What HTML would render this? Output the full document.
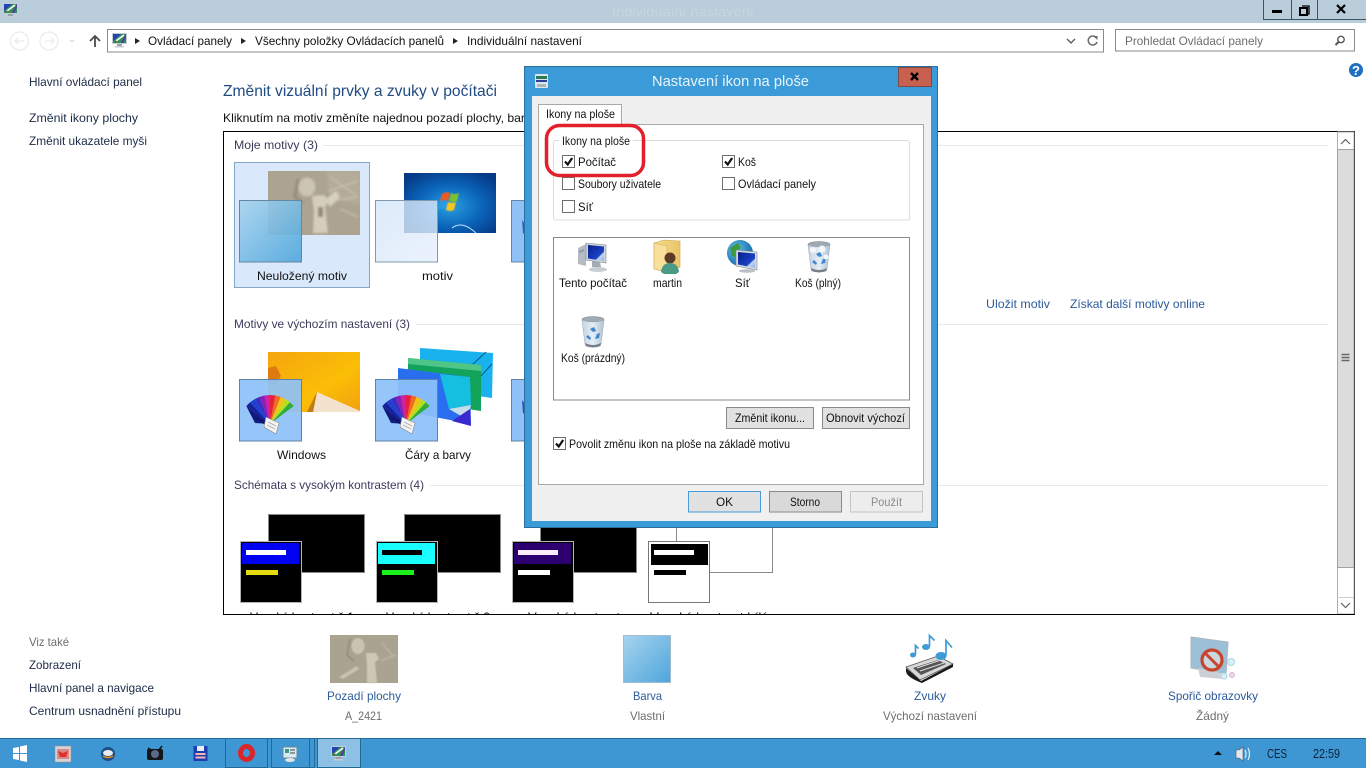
<!DOCTYPE html>
<html lang="cs"><head><meta charset="utf-8"><title>Individuální nastavení</title>
<style>
html,body{margin:0;padding:0;width:1366px;height:768px;overflow:hidden;background:#fff}
svg{display:block}
text{font-family:"Liberation Sans",sans-serif;font-size:12px;fill:#1c2b46}
.b{fill:#000}.d{fill:#111}.l{fill:#2b5a9b}.g{fill:#6d6d6d}.h{fill:#3b3b5c}
</style></head><body>
<svg xmlns="http://www.w3.org/2000/svg" width="1366" height="768" viewBox="0 0 1366 768">
<defs>
<linearGradient id="gs" x1="0" y1="0" x2="1" y2="1"><stop offset="0" stop-color="#a8d3ee"/><stop offset="1" stop-color="#4da6dc"/></linearGradient>
<linearGradient id="gl" x1="0" y1="0" x2="1" y2="1"><stop offset="0" stop-color="#d4e5f8"/><stop offset="1" stop-color="#e6f0fc"/></linearGradient>
<radialGradient id="w7" cx=".5" cy=".55" r=".65"><stop offset="0" stop-color="#2a9fe0"/><stop offset=".55" stop-color="#0a63b8"/><stop offset="1" stop-color="#063a86"/></radialGradient>
<linearGradient id="org" x1="0" y1="0" x2="1" y2="1"><stop offset="0" stop-color="#f5a50f"/><stop offset=".6" stop-color="#fbbe06"/><stop offset="1" stop-color="#f2a010"/></linearGradient>
<linearGradient id="scr" x1="0" y1="0" x2="1" y2="1"><stop offset="0" stop-color="#0a1f8a"/><stop offset=".68" stop-color="#1a43c8"/><stop offset=".74" stop-color="#c5d6f4"/><stop offset="1" stop-color="#8fade4"/></linearGradient>
<linearGradient id="fold" x1="0" y1="0" x2="1" y2="0"><stop offset="0" stop-color="#f6dc8c"/><stop offset="1" stop-color="#e9c46a"/></linearGradient>
<linearGradient id="bin" x1="0" y1="0" x2="1" y2="0"><stop offset="0" stop-color="#c3d3e2"/><stop offset=".5" stop-color="#e4eef6"/><stop offset="1" stop-color="#aec1d2"/></linearGradient>
<radialGradient id="globe" cx=".35" cy=".35" r=".75"><stop offset="0" stop-color="#5cc0ea"/><stop offset="1" stop-color="#135f9c"/></radialGradient>
<filter id="bl" x="-10%" y="-10%" width="120%" height="120%"><feGaussianBlur stdDeviation="1"/></filter>
<filter id="bs"><feGaussianBlur stdDeviation=".5"/></filter>
<clipPath id="panel"><rect x="224" y="132" width="1113" height="482"/></clipPath>
<clipPath id="cb"><rect width="92" height="64"/></clipPath>
<clipPath id="cb2"><rect width="68" height="48"/></clipPath>

<g id="mon15">
<rect x="0" y="0" width="15" height="11" fill="#c5ccd4"/>
<rect x="1" y="1" width="13" height="9" fill="#2f8f5a"/>
<path d="M1 1h8L1 8z" fill="#2541b8"/>
<path d="M14 1v3l-3 6H9z" fill="#5b2ea5"/>
<path d="M4 8L12 2" stroke="#fff" stroke-width="1.6"/>
<path d="M3 9l2-.6-1.200-1z" fill="#d22"/>
<rect x="5" y="11" width="5" height="2" fill="#9aa3ad"/>
<rect x="3" y="13" width="9" height="1.500" fill="#c9ced4"/>
</g>

<g id="baby">
<rect width="92" height="64" fill="#aca490"/>
<g filter="url(#bl)" clip-path="url(#cb)">
<path d="M58 0h34v34l-30-8z" fill="#b4ac99"/>
<path d="M62 6l26 18M60 20l30-10M64 30l26-4M72 38l18 8" stroke="#c6bfad" stroke-width="1.500" fill="none"/>
<ellipse cx="39" cy="16" rx="8.500" ry="9.500" fill="#cbc5b2"/>
<path d="M44 25l12-1 5 6-4 6 3 26-15 0 1-22z" fill="#d4cebb"/>
<path d="M58 28l10-8 4 6-10 10z" fill="#d6d0bd"/>
<path d="M30 8l-3 18 8 6" stroke="#948d7a" stroke-width="3" fill="none"/>
<rect x="50" y="36" width="5" height="10" fill="#928b78"/>
</g>
</g>

<g id="baby2">
<rect width="68" height="48" fill="#aaa390"/>
<g filter="url(#bs)">
<ellipse cx="28" cy="11" rx="6.500" ry="8" fill="#c9c3b0"/>
<path d="M36 18l10 0 3 6-4 3 2 21-10 0 0-18z" fill="#cdc7b4"/>
<path d="M9 42l18-11 2 3-16 10z" fill="#c9c3b0"/>
<path d="M52 8l12 14M50 26l16-6" stroke="#b9b29f" stroke-width="1.500"/>
<path d="M20 4l-3 16 7 6" stroke="#95907d" stroke-width="2" fill="none"/>
</g>
</g>

<g id="pal">
<g transform="translate(31,47)">
<path d="M0-2L-23.700-19.900-19.900-23.700z" fill="#16209a"/>
<path d="M0-2L-23.700-19.900-15-3z" fill="#101a80"/>
<path d="M0-2L-19.900-23.700-15.500-26.800z" fill="#1f3fd0"/>
<path d="M0-2L-15.500-26.800-10.600-29.100z" fill="#3a2fc0"/>
<path d="M0-2L-10.600-29.100-5.400-30.500z" fill="#8a1fb8"/>
<path d="M0-2L-5.400-30.500 0-31z" fill="#d41fa0"/>
<path d="M0-2L0-31 5.400-30.500z" fill="#e81f3a"/>
<path d="M0-2L5.400-30.500 10.600-29.100z" fill="#ef6a1a"/>
<path d="M0-2L10.600-29.100 15.500-26.800z" fill="#f4c01a"/>
<path d="M0-2L15.500-26.800 19.900-23.700z" fill="#b8e01a"/>
<path d="M0-2L19.900-23.700 23.700-19.900z" fill="#2faf3a"/>
<path d="M-16-9L-1-3 3 3-8-3z" fill="#0d1565"/>
<path d="M-4-9L9-3 6 8-6 1z" fill="#f3f3f3" stroke="#888" stroke-width=".6"/>
<path d="M-2-4l8 4M-3-1l8 4" stroke="#aaa" stroke-width=".8"/>
</g>
</g>

<g id="contrast">
<rect x="0.500" y="0.500" width="61" height="61" fill="#000" stroke="#b5b5b5"/>
</g>

<g id="pc">
<path d="M1 7l8-4v22l-8-2z" fill="#b4bbc2"/>
<path d="M2 10l5-2v2l-5 2z" fill="#8f98a2"/>
<path d="M9 2l20 2v18L9 19z" fill="#cfd4da" stroke="#7f8791" stroke-width=".6"/>
<path d="M11 4l16 1.500v14.500L11 17.500z" fill="url(#scr)"/>
<path d="M15 20l8 1 1 5h-9z" fill="#a5acb4"/>
<ellipse cx="21" cy="28.500" rx="9" ry="2.500" fill="#c9ced4"/>
</g>

<g id="binI">
<ellipse cx="13" cy="3.500" rx="11" ry="3" fill="#9fa9b1" stroke="#7f8890" stroke-width=".6"/>
<path d="M2 4l3 24q8 4 16 0l3-24q-11 4-22 0z" fill="url(#bin)" stroke="#9aa6b0" stroke-width=".5"/>
<path d="M10 13l4-2 2 4-3 1zM8 19l3 3-1 2-4-3zM17 18l3-1-1 5-4 1z" fill="#3f86cf"/>
<path d="M5 27q8 4 16 0l-.5 3q-7.500 3-15 0z" fill="#777e85"/>
</g>
</defs>

<!-- title bar -->
<rect width="1366" height="23" fill="#b9cdda"/>
<use href="#mon15" transform="translate(3,3)"/>
<text x="612" y="16" textLength="142" lengthAdjust="spacingAndGlyphs" style="font-size:13px;fill:#c6d6df">Individuální nastavení</text>
<path d="M1263.500 0v19.500h103M1291.500 0v19.500M1317.500 0v19.500" fill="none" stroke="#3f5463"/>
<rect x="1272" y="10" width="10" height="3" fill="#000"/>
<path d="M1302 6h7v8h-2" fill="none" stroke="#000" stroke-width="1.300"/>
<rect x="1300" y="8" width="7" height="7" fill="none" stroke="#000" stroke-width="2"/>
<path d="M1337 5l8 8M1345 5l-8 8" stroke="#000" stroke-width="2.200"/>

<!-- nav row -->
<g fill="none" stroke="#ececec" stroke-width="1.300">
<circle cx="19.500" cy="41" r="9"/><circle cx="49" cy="41" r="9"/>
<path d="M24 41h-9m3-3l-3 3 3 3M45 41h9m-3-3l3 3-3 3"/>
</g>
<path d="M69 40h6l-3 3z" fill="#e6e6e6"/>
<path d="M95 47v-11m-5 5l5-5 5 5" fill="none" stroke="#4b4b4b" stroke-width="1.800"/>
<rect x="107.500" y="29.500" width="996" height="22.500" fill="#fff" stroke="#8a8a8a"/>
<use href="#mon15" transform="translate(112,33)"/>
<path d="M135 38l5 3-5 3z" fill="#222"/>
<path d="M241 38l5 3-5 3zM453 38l5 3-5 3z" fill="#222"/>
<text x="148" y="45" textLength="84" lengthAdjust="spacingAndGlyphs" class="d">Ovládací panely</text>
<text x="255" y="45" textLength="189" lengthAdjust="spacingAndGlyphs" class="d">Všechny položky Ovládacích panelů</text>
<text x="467" y="45" textLength="115" lengthAdjust="spacingAndGlyphs" class="d">Individuální nastavení</text>
<path d="M1067 39l4 4 4-4" fill="none" stroke="#555" stroke-width="1.300"/>
<path d="M1096.500 38a4.500 4.500 0 1 0 .5 4" fill="none" stroke="#6b6b6b" stroke-width="1.500"/>
<path d="M1093 36h4.500v4z" fill="#6b6b6b"/>
<rect x="1115.500" y="29.500" width="239" height="21.500" fill="#fff" stroke="#8a8a8a"/>
<text x="1125" y="45" textLength="138" lengthAdjust="spacingAndGlyphs" class="g">Prohledat Ovládací panely</text>
<circle cx="1341" cy="39.500" r="3.200" fill="none" stroke="#555" stroke-width="1.400"/>
<path d="M1338.500 42l-3 3" stroke="#555" stroke-width="2"/>

<circle cx="1356" cy="70" r="7" fill="#1f70c1"/>
<text x="1352" y="75" style="font-size:13px;font-weight:bold;fill:#fff">?</text>

<!-- left nav -->
<text x="29" y="86" textLength="113" lengthAdjust="spacingAndGlyphs">Hlavní ovládací panel</text>
<text x="29" y="122" textLength="109" lengthAdjust="spacingAndGlyphs">Změnit ikony plochy</text>
<text x="29" y="145" textLength="118" lengthAdjust="spacingAndGlyphs">Změnit ukazatele myši</text>

<!-- header -->
<text x="223" y="96" textLength="274" lengthAdjust="spacingAndGlyphs" style="font-size:16px;fill:#1f4a82">Změnit vizuální prvky a zvuky v počítači</text>
<text x="223" y="122" textLength="302" lengthAdjust="spacingAndGlyphs" class="d">Kliknutím na motiv změníte najednou pozadí plochy, bar</text>

<!-- panel -->
<rect x="223.500" y="131.500" width="1131" height="483" fill="#fff" stroke="#000"/>
<g clip-path="url(#panel)">
<text x="234" y="149" textLength="84" lengthAdjust="spacingAndGlyphs" class="h">Moje motivy (3)</text>
<rect x="323" y="145" width="1005" height="1" fill="#e8e8e8"/>
<text x="234" y="328" textLength="176" lengthAdjust="spacingAndGlyphs" class="h">Motivy ve výchozím nastavení (3)</text>
<rect x="416" y="324" width="912" height="1" fill="#e8e8e8"/>
<text x="234" y="489" textLength="190" lengthAdjust="spacingAndGlyphs" class="h">Schémata s vysokým kontrastem (4)</text>
<rect x="430" y="485" width="898" height="1" fill="#e8e8e8"/>

<!-- selected -->
<rect x="234.500" y="162.500" width="135" height="125" fill="#d9e9fb" stroke="#84a7c8"/>
<use href="#baby" transform="translate(268,171)"/>
<rect x="239.500" y="200.500" width="62" height="61.500" fill="url(#gs)" fill-opacity=".9" stroke="#6487a3"/>
<text x="257" y="280" textLength="90" lengthAdjust="spacingAndGlyphs" class="d">Neuložený motiv</text>

<!-- motiv -->
<rect x="404" y="173" width="92" height="60" fill="url(#w7)"/>
<g filter="url(#bs)">
<path d="M442 194q4-3 8-1l-2 8q-4-2-8 0z" fill="#ee5a20"/>
<path d="M451 193q4 2 8 0l-2 8q-4 2-8 0z" fill="#7dc030"/>
<path d="M439 202q4-2 8 0l-2 8q-4-2-8 0z" fill="#2a9ae0"/>
<path d="M448 202q4 2 8 0l-2 8q-4 2-8 0z" fill="#f5c61d"/>
</g>
<path d="M452 228q10-8 24 5" fill="none" stroke="#bfe4f8" stroke-width="1"/>
<rect x="375.500" y="200.500" width="62" height="61.500" fill="url(#gl)" fill-opacity=".8" stroke="#7f98ad"/>
<text x="422" y="280" textLength="31" lengthAdjust="spacingAndGlyphs" class="d">motiv</text>
<rect x="511.500" y="200.500" width="30" height="61.500" fill="#8fc1f7" stroke="#6487a3"/>
<path d="M522 220l6 8-5 6z" fill="#2a63c8"/>

<text x="986" y="308" textLength="64" lengthAdjust="spacingAndGlyphs" class="l">Uložit motiv</text>
<text x="1070" y="308" textLength="135" lengthAdjust="spacingAndGlyphs" class="l">Získat další motivy online</text>

<!-- Windows -->
<rect x="268" y="352" width="92" height="60" fill="url(#org)"/>
<path d="M268 368l8-2 5 10-6 8h-7z" fill="#dd7a10"/>
<path d="M317 392l43 19v1h-47z" fill="#f3e3cd"/>
<path d="M317 392l-4 20h-6z" fill="#c07a18"/>
<rect x="239.500" y="379.500" width="62" height="61.500" fill="#8dc1f8" fill-opacity=".92" stroke="#5f83a6"/>
<use href="#pal" transform="translate(239,379)"/>
<text x="277" y="459" textLength="49" lengthAdjust="spacingAndGlyphs" class="d">Windows</text>

<!-- Lines and colours -->
<path d="M420 348l73 5-1 45-72-10z" fill="#19b2ef"/>
<path d="M458 378l28-26M470 388l22-24" stroke="#075a80" stroke-width="1"/>
<path d="M408 358l73 7v46l-73-11z" fill="#12a35a"/>
<path d="M408 358l73 7v6l-73-7z" fill="#4fc588"/>
<path d="M398 368l72 9 1 47-73-14z" fill="#2a6ef0"/>
<path d="M440 374l30 3 1 28-22 4z" fill="#14bfe0"/>
<path d="M449 409l22-4-3 15z" fill="#c5dcea"/>
<path d="M452 421l18-12 1 17z" fill="#3a28d0"/>
<rect x="375.500" y="379.500" width="62" height="61.500" fill="#8dc1f8" fill-opacity=".92" stroke="#5f83a6"/>
<use href="#pal" transform="translate(375,379)"/>
<text x="405" y="459" textLength="66" lengthAdjust="spacingAndGlyphs" class="d">Čáry a barvy</text>
<rect x="511.500" y="379.500" width="30" height="61.500" fill="#8dc1f8" stroke="#5f83a6"/>
<path d="M522 400l6 8-5 6z" fill="#2a50c8"/>

<!-- contrast -->
<rect x="268.500" y="514.500" width="96" height="58" fill="#000" stroke="#8a8a8a"/>
<use href="#contrast" transform="translate(240,541)"/>
<rect x="242" y="543" width="57" height="21" fill="#0000f2"/>
<rect x="246" y="550" width="40" height="5" fill="#fff"/>
<rect x="246" y="570" width="32" height="5" fill="#e4dc10"/>

<rect x="404.500" y="514.500" width="96" height="58" fill="#000" stroke="#8a8a8a"/>
<use href="#contrast" transform="translate(376,541)"/>
<rect x="378" y="543" width="57" height="21" fill="#19ffff"/>
<rect x="382" y="550" width="40" height="5" fill="#000"/>
<rect x="382" y="570" width="32" height="5" fill="#1cf01c"/>

<rect x="540.500" y="514.500" width="96" height="58" fill="#000" stroke="#8a8a8a"/>
<use href="#contrast" transform="translate(512,541)"/>
<rect x="514" y="543" width="57" height="21" fill="#2c0071"/>
<rect x="518" y="550" width="40" height="5" fill="#fbeeff"/>
<rect x="518" y="570" width="32" height="5" fill="#fff"/>

<rect x="676.500" y="514.500" width="96" height="58" fill="#fff" stroke="#8a8a8a"/>
<rect x="648.500" y="541.500" width="61" height="61" fill="#fff" stroke="#777"/>
<rect x="651" y="544" width="57" height="21" fill="#000"/>
<rect x="654" y="550" width="40" height="5" fill="#fff"/>
<rect x="654" y="570" width="32" height="5" fill="#000"/>

<text x="250" y="621" textLength="104" lengthAdjust="spacingAndGlyphs" class="d">Vysoký kontrast č.1</text>
<text x="386" y="621" textLength="104" lengthAdjust="spacingAndGlyphs" class="d">Vysoký kontrast č.2</text>
<text x="528" y="621" textLength="92" lengthAdjust="spacingAndGlyphs" class="d">Vysoký kontrast</text>
<text x="650" y="621" textLength="118" lengthAdjust="spacingAndGlyphs" class="d">Vysoký kontrast bílý</text>
</g>

<!-- scrollbar -->
<rect x="1337.500" y="132" width="16.500" height="482" fill="#fff" stroke="#b0b0b0"/>
<rect x="1337.500" y="149.500" width="16.500" height="418" fill="#dcdcdc" stroke="#a3a3a3"/>
<path d="M1341 144l4.500-4.500 4.500 4.500M1341 603l4.500 4.500 4.500-4.500" fill="none" stroke="#606060" stroke-width="1.200"/>
<path d="M1337 597.500h17" stroke="#cfcfcf"/>
<path d="M1341.500 354.500h8M1341.500 357.500h8M1341.500 360.500h8" stroke="#666" stroke-width="1.500"/>
<rect x="223" y="614" width="1132" height="1" fill="#000"/>

<!-- bottom left -->
<text x="29" y="646" textLength="40" lengthAdjust="spacingAndGlyphs" class="g">Viz také</text>
<text x="29" y="669" textLength="52" lengthAdjust="spacingAndGlyphs">Zobrazení</text>
<text x="29" y="692" textLength="125" lengthAdjust="spacingAndGlyphs">Hlavní panel a navigace</text>
<text x="29" y="715" textLength="152" lengthAdjust="spacingAndGlyphs">Centrum usnadnění přístupu</text>

<!-- bottom items -->
<use href="#baby2" transform="translate(330,635)"/>
<text x="327" y="700" textLength="74" lengthAdjust="spacingAndGlyphs" class="l">Pozadí plochy</text>
<text x="345" y="720" textLength="37" lengthAdjust="spacingAndGlyphs" class="g">A_2421</text>

<rect x="623.500" y="635.500" width="47" height="47" fill="url(#gs)" stroke="#a0bccf"/>
<text x="633" y="700" textLength="29" lengthAdjust="spacingAndGlyphs" class="l">Barva</text>
<text x="630" y="720" textLength="35" lengthAdjust="spacingAndGlyphs" class="g">Vlastní</text>

<g>
<path d="M906 667l32-11 15 8-33 16z" fill="#d8d8d8" stroke="#555" stroke-width=".8"/>
<path d="M913 668l25-8 8 4-25 11z" fill="#555"/>
<path d="M917 668l24-8M920 671l24-8" stroke="#ddd" stroke-width="1"/>
<path d="M906 668l15 13 32-17v3l-31 16q-16-6-16-12z" fill="#1b1b1b"/>
<g fill="#3f9ad8"><ellipse cx="913" cy="655" rx="3" ry="2.500"/><ellipse cx="926" cy="647" rx="4" ry="3"/><ellipse cx="941" cy="656" rx="5.500" ry="4"/></g>
<path d="M915.500 654.500v-9l3 3M929.500 646.500v-11l5 5M946 655.500v-15l6 7" fill="none" stroke="#3f9ad8" stroke-width="1.700"/>
</g>
<text x="914" y="700" textLength="32" lengthAdjust="spacingAndGlyphs" class="l">Zvuky</text>
<text x="883" y="720" textLength="94" lengthAdjust="spacingAndGlyphs" class="g">Výchozí nastavení</text>

<g>
<path d="M1191 637l37 5-2 32-35-6z" fill="#9cc0d8" stroke="#aab4bc"/>
<path d="M1198 668l20 4 6 7-24-2z" fill="#c9cfd4"/>
<g fill="#d9eef5" stroke="#a6d6e6"><circle cx="1231" cy="662" r="3.500"/><circle cx="1224" cy="676" r="3"/></g>
<g fill="#e9d9e6" stroke="#d8b6d0"><circle cx="1232" cy="675" r="2.500"/></g>
<circle cx="1212" cy="660" r="10" fill="#e6e6e6" fill-opacity=".6" stroke="#c9442c" stroke-width="3.200"/>
<path d="M1205 653l14 14" stroke="#c9442c" stroke-width="3"/>
</g>
<text x="1168" y="700" textLength="90" lengthAdjust="spacingAndGlyphs" class="l">Spořič obrazovky</text>
<text x="1196" y="720" textLength="33" lengthAdjust="spacingAndGlyphs" class="g">Žádný</text>

<!-- dialog -->
<rect x="524.500" y="66.500" width="413" height="461" fill="#3a9bd8" stroke="#2d6f9c"/>
<rect x="532" y="96" width="399" height="425" fill="#f0f0f0"/>
<g transform="translate(535,73)">
<rect x="0" y="1" width="13" height="14" rx="1" fill="#dfe6ea"/>
<path d="M1 3h11v3H1z" fill="#2a7a5a"/><path d="M1 7h11v2H1z" fill="#2d3f99"/><path d="M2 11h9v3H2z" fill="#a9b7bf"/>
</g>
<text x="652" y="86" textLength="157" lengthAdjust="spacingAndGlyphs" style="font-size:15px;fill:#e9f3fa">Nastavení ikon na ploše</text>
<rect x="898.500" y="67.500" width="33" height="19" fill="#c8604f" stroke="#7f4a45"/>
<path d="M911 73l7 7M918 73l-7 7" stroke="#000" stroke-width="2.400"/>

<rect x="538.500" y="124.500" width="385" height="360" fill="#fff" stroke="#a8a8a8"/>
<path d="M538.500 124.500v-20h83v20" fill="#fff" stroke="#a8a8a8"/>
<rect x="539" y="120" width="82" height="6" fill="#fff"/>
<text x="546" y="118" textLength="69" lengthAdjust="spacingAndGlyphs" class="d">Ikony na ploše</text>

<rect x="553.500" y="140.500" width="356" height="79.500" rx="2" fill="#fff" stroke="#dcdcdc"/>
<rect x="559" y="136" width="74" height="8" fill="#fff"/>
<text x="562" y="145" textLength="68" lengthAdjust="spacingAndGlyphs" class="d">Ikony na ploše</text>

<g fill="#fff" stroke="#6e6e6e">
<rect x="562.500" y="155.500" width="12" height="12"/>
<rect x="722.500" y="155.500" width="12" height="12"/>
<rect x="562.500" y="177.500" width="12" height="12"/>
<rect x="722.500" y="177.500" width="12" height="12"/>
<rect x="562.500" y="200.500" width="12" height="12"/>
<rect x="553.500" y="437.500" width="12" height="12"/>
</g>
<g fill="none" stroke="#111" stroke-width="2.200">
<path d="M565 161.500l2.700 3 4.500-6.500"/>
<path d="M725 161.500l2.700 3 4.500-6.500"/>
<path d="M556 443.500l2.700 3 4.500-6.500"/>
</g>
<text x="578" y="166" textLength="38" lengthAdjust="spacingAndGlyphs" class="d">Počítač</text>
<text x="738" y="166" textLength="18" lengthAdjust="spacingAndGlyphs" class="d">Koš</text>
<text x="578" y="188" textLength="83" lengthAdjust="spacingAndGlyphs" class="d">Soubory uživatele</text>
<text x="738" y="188" textLength="78" lengthAdjust="spacingAndGlyphs" class="d">Ovládací panely</text>
<text x="578" y="211" textLength="15" lengthAdjust="spacingAndGlyphs" class="d">Síť</text>

<rect x="546.500" y="125.500" width="97" height="50" rx="13" fill="none" stroke="#e2202c" stroke-width="3.500"/>

<rect x="553.500" y="237.500" width="356" height="162.500" fill="#fff" stroke="#8a8a8a"/>
<use href="#pc" transform="translate(577,241)"/>
<g transform="translate(653,240)">
<path d="M1 3l10-3 16 1v26l-13 5-13-3z" fill="url(#fold)" stroke="#c9a650" stroke-width=".6"/>
<path d="M1 3l13 3v26l-13-3z" fill="#f8e09a" stroke="#c9a650" stroke-width=".5"/>
<circle cx="17" cy="18" r="5.500" fill="#5a3a24"/>
<path d="M8 32q1-9 9-9t9 9l-3 2H11z" fill="#4a9a86"/>
</g>
<g transform="translate(726,240)">
<circle cx="14" cy="13" r="13" fill="url(#globe)"/>
<path d="M4 8l8-5 3 5-5 4 1 6-5-2zM17 20l5-3 2 4-4 4z" fill="#3d9a3a"/>
<path d="M10 10l21 2v18l-21-4z" fill="#d6dbe1" stroke="#7f8791" stroke-width=".6"/>
<path d="M12 12l17 1.500V28l-17-3.500z" fill="url(#scr)"/>
<ellipse cx="21" cy="31" rx="8" ry="1.800" fill="#b9bfc6"/>
</g>
<use href="#binI" transform="translate(806,241)"/>
<g fill="#f4f7fa"><circle cx="813" cy="250" r="3"/><circle cx="822" cy="249" r="3.500"/><circle cx="826" cy="257" r="2.500"/></g>
<use href="#binI" transform="translate(580,316)"/>
<text x="559" y="287" textLength="68" lengthAdjust="spacingAndGlyphs" class="d">Tento počítač</text>
<text x="653" y="287" textLength="29" lengthAdjust="spacingAndGlyphs" class="d">martin</text>
<text x="735" y="287" textLength="15" lengthAdjust="spacingAndGlyphs" class="d">Síť</text>
<text x="795" y="287" textLength="46" lengthAdjust="spacingAndGlyphs" class="d">Koš (plný)</text>
<text x="561" y="362" textLength="64" lengthAdjust="spacingAndGlyphs" class="d">Koš (prázdný)</text>

<rect x="726.500" y="407.500" width="87" height="21" fill="#e1e1e1" stroke="#8a8a8a"/>
<rect x="822.500" y="407.500" width="87" height="21" fill="#e1e1e1" stroke="#8a8a8a"/>
<text x="735" y="422" textLength="70" lengthAdjust="spacingAndGlyphs" class="d">Změnit ikonu...</text>
<text x="826" y="422" textLength="79" lengthAdjust="spacingAndGlyphs" class="d">Obnovit výchozí</text>
<text x="569" y="448" textLength="221" lengthAdjust="spacingAndGlyphs" class="d">Povolit změnu ikon na ploše na základě motivu</text>

<rect x="688.500" y="491.500" width="72" height="20.500" fill="#e1e1e1" stroke="#4a9bd6"/>
<rect x="769.500" y="491.500" width="72" height="20.500" fill="#d9d9d9" stroke="#8a8a8a"/>
<rect x="850.500" y="491.500" width="72" height="20.500" fill="#ededed" stroke="#c4c4c4"/>
<text x="716" y="506" textLength="17" lengthAdjust="spacingAndGlyphs" class="d">OK</text>
<text x="790" y="506" textLength="30" lengthAdjust="spacingAndGlyphs" class="d">Storno</text>
<text x="871" y="506" textLength="31" lengthAdjust="spacingAndGlyphs" style="fill:#8a8a8a">Použít</text>

<!-- taskbar -->
<rect y="738" width="1366" height="30" fill="#3e96d2"/>
<rect y="738" width="1366" height="1" fill="#1f6a96"/>
<path d="M13 748l6-1v6h-6zM20 746.500l7-1.500v8h-7zM13 754h6v6l-6-1zM20 754h7v8l-7-1.500z" fill="#fff"/>
<rect x="55" y="746" width="16" height="16" fill="#d4d4d4" stroke="#a88" stroke-width=".5"/>
<rect x="57" y="749" width="12" height="10" fill="#d98a86"/>
<path d="M58 751l5 2 5-2-2 6h-6z" fill="#e0302a"/>
<circle cx="108" cy="754" r="7" fill="#1d4f86"/>
<ellipse cx="108" cy="753" rx="5" ry="3" fill="#e9eef2"/>
<path d="M103 756q5 3 10 0" stroke="#f08a1c" stroke-width="1.500" fill="none"/>
<rect x="147" y="749" width="16" height="11" rx="2" fill="#15151c"/>
<circle cx="155" cy="754" r="4" fill="#5b6a86"/>
<path d="M148 748l3 2M162 746l-3 4" stroke="#111" stroke-width="1.500"/>
<rect x="193.500" y="746" width="14" height="15" fill="#1d3fb0"/>
<rect x="197" y="746" width="7" height="5" fill="#e8eef8"/>
<rect x="195.500" y="753" width="10" height="2" fill="#f4b4b4"/><rect x="195.500" y="756.500" width="10" height="2" fill="#f4b4b4"/>
<rect x="225.500" y="738.500" width="42" height="29" fill="#3e96d2" stroke="#1f6a96"/>
<ellipse cx="246.500" cy="753" rx="6" ry="6.500" fill="none" stroke="#d9262b" stroke-width="5"/>
<rect x="271.500" y="738.500" width="38" height="29" fill="#3e96d2" stroke="#1f6a96"/>
<rect x="309.500" y="738.500" width="5" height="29" fill="#3e96d2" stroke="#1f6a96"/>
<rect x="283" y="747" width="14" height="11" fill="#d7e9f3" stroke="#6a8a9a"/>
<rect x="285" y="749" width="4" height="4" fill="#3a9a8a"/>
<path d="M290 750h5M290 753h5" stroke="#444"/>
<ellipse cx="290" cy="760" rx="5" ry="2" fill="#e5e5e5"/>
<rect x="317.500" y="738.500" width="43" height="29" fill="#8cc0e4" stroke="#1f6a96"/>
<use href="#mon15" transform="translate(331,746)"/>
<path d="M1214 755l4-4 4 4z" fill="#111"/>
<path d="M1236 750h3l4-3v14l-4-3h-3z" fill="#dfe9ef" stroke="#556" stroke-width=".6"/>
<path d="M1245 750q2 4 0 8M1248 748q3 6 0 12" fill="none" stroke="#e5eef4" stroke-width="1.200"/>
<text x="1267" y="758" textLength="20" lengthAdjust="spacingAndGlyphs" style="font-size:13px;fill:#0c2238">CES</text>
<text x="1313" y="758" textLength="27" lengthAdjust="spacingAndGlyphs" style="font-size:13px;fill:#0c2238">22:59</text>
</svg>
</body></html>
